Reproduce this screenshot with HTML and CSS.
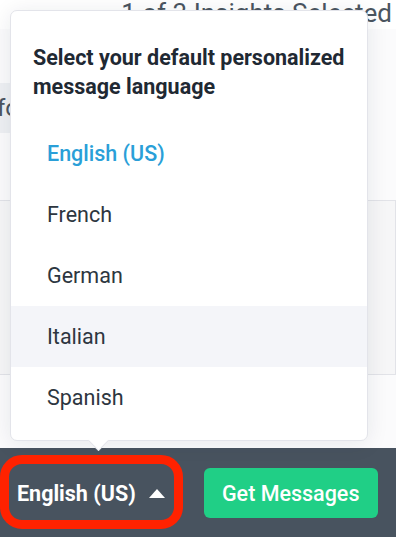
FILE: index.html
```html
<!DOCTYPE html>
<html>
<head>
<meta charset="utf-8">
<link rel="stylesheet" href="styles.css">
</head>
<body>
<div class="page">
  <div class="header">1 of 3 Insights Selected</div>
  <div class="search-row"><div class="search">for</div></div>
  <div class="card"></div>
  <div class="spacer"></div>
  <div class="footer">
    <button class="lang-toggle">English (US)<span class="caret"></span></button>
    <button class="get-btn">Get Messages</button>
  </div>

  <div class="popover">
    <div class="popover-title">Select your default personalized message language</div>
    <ul class="options">
      <li class="option selected">English (US)</li>
      <li class="option">French</li>
      <li class="option">German</li>
      <li class="option hover">Italian</li>
      <li class="option">Spanish</li>
    </ul>
    <div class="arrow"></div>
  </div>
  <div class="highlight-ring"></div>
</div>
</body>
</html>
```

FILE: styles.css
```css
html, body {
  margin: 0;
  padding: 0;
  background: #ffffff;
}
body {
  font-family: Roboto, "Liberation Sans", Arial, sans-serif;
  width: 408px;
  height: 554px;
  overflow: hidden;
}
.page {
  position: relative;
  width: 396px;
  height: 537px;
  display: flex;
  flex-direction: column;
  background: #fbfbfc;
}
.header {
  height: 32px;
  font-size: 26px;
  line-height: 32px;
  color: #4b5560;
  text-align: right;
  padding-right: 4px;
  white-space: nowrap;
  background: #ffffff;
  margin-top: -3px;
}
.search-row {
  margin-top: 54px;
  height: 50px;
}
.search {
  width: 300px;
  height: 50px;
  margin-left: -3px;
  background: #eef0f3;
  color: #4b5560;
  font-size: 24px;
  line-height: 50px;
}
.card {
  margin-top: 67px;
  margin-left: -2px;
  height: 173px;
  border: 1px solid #e2e3e8;
  background: #f6f6f7;
}
.spacer {
  flex: 1;
}
.footer {
  height: 89px;
  background: #48535f;
  display: flex;
  align-items: center;
  padding-left: 17px;
}
.lang-toggle {
  background: none;
  border: 0;
  padding: 0;
  margin: 0;
  color: #ffffff;
  font-family: inherit;
  font-size: 21.5px;
  font-weight: 700;
  display: flex;
  align-items: center;
  margin-top: 2px;
}
.caret {
  display: inline-block;
  width: 0;
  height: 0;
  margin-left: 13px;
  border-left: 8px solid transparent;
  border-right: 8px solid transparent;
  border-bottom: 9px solid #ffffff;
}
.get-btn {
  margin-left: 39px;
  width: 174px;
  height: 50px;
  border: 0;
  border-radius: 6px;
  background: #20cf86;
  color: #ffffff;
  font-family: inherit;
  font-size: 21.5px;
  font-weight: 500;
  margin-top: 1px;
}
.popover {
  position: absolute;
  left: 10px;
  top: 10px;
  width: 356px;
  background: #ffffff;
  border: 1px solid #e3e4ea;
  border-radius: 7px;
  box-shadow: 0 2px 22px rgba(20, 30, 50, 0.09);
  padding-top: 32px;
  padding-bottom: 12px;
}
.popover-title {
  padding: 0 14px 0 22px;
  font-size: 21.5px;
  line-height: 29px;
  font-weight: 700;
  color: #1f2933;
}
.options {
  list-style: none;
  margin: 22px 0 0 0;
  padding: 0;
}
.option {
  height: 61px;
  line-height: 61px;
  padding-left: 36px;
  font-size: 21.5px;
  color: #2d3640;
}
.option.selected {
  color: #2a9fd8;
  font-weight: 500;
}
.option.hover {
  background: #f4f5f9;
}
.arrow {
  position: absolute;
  left: 80px;
  bottom: -8px;
  width: 14px;
  height: 14px;
  background: #ffffff;
  transform: rotate(45deg);
  border-right: 1px solid #e3e4ea;
  border-bottom: 1px solid #e3e4ea;
}
.highlight-ring {
  position: absolute;
  left: 0px;
  top: 455px;
  width: 165px;
  height: 56px;
  border: 9px solid #ff2200;
  border-radius: 22px;
}
```
